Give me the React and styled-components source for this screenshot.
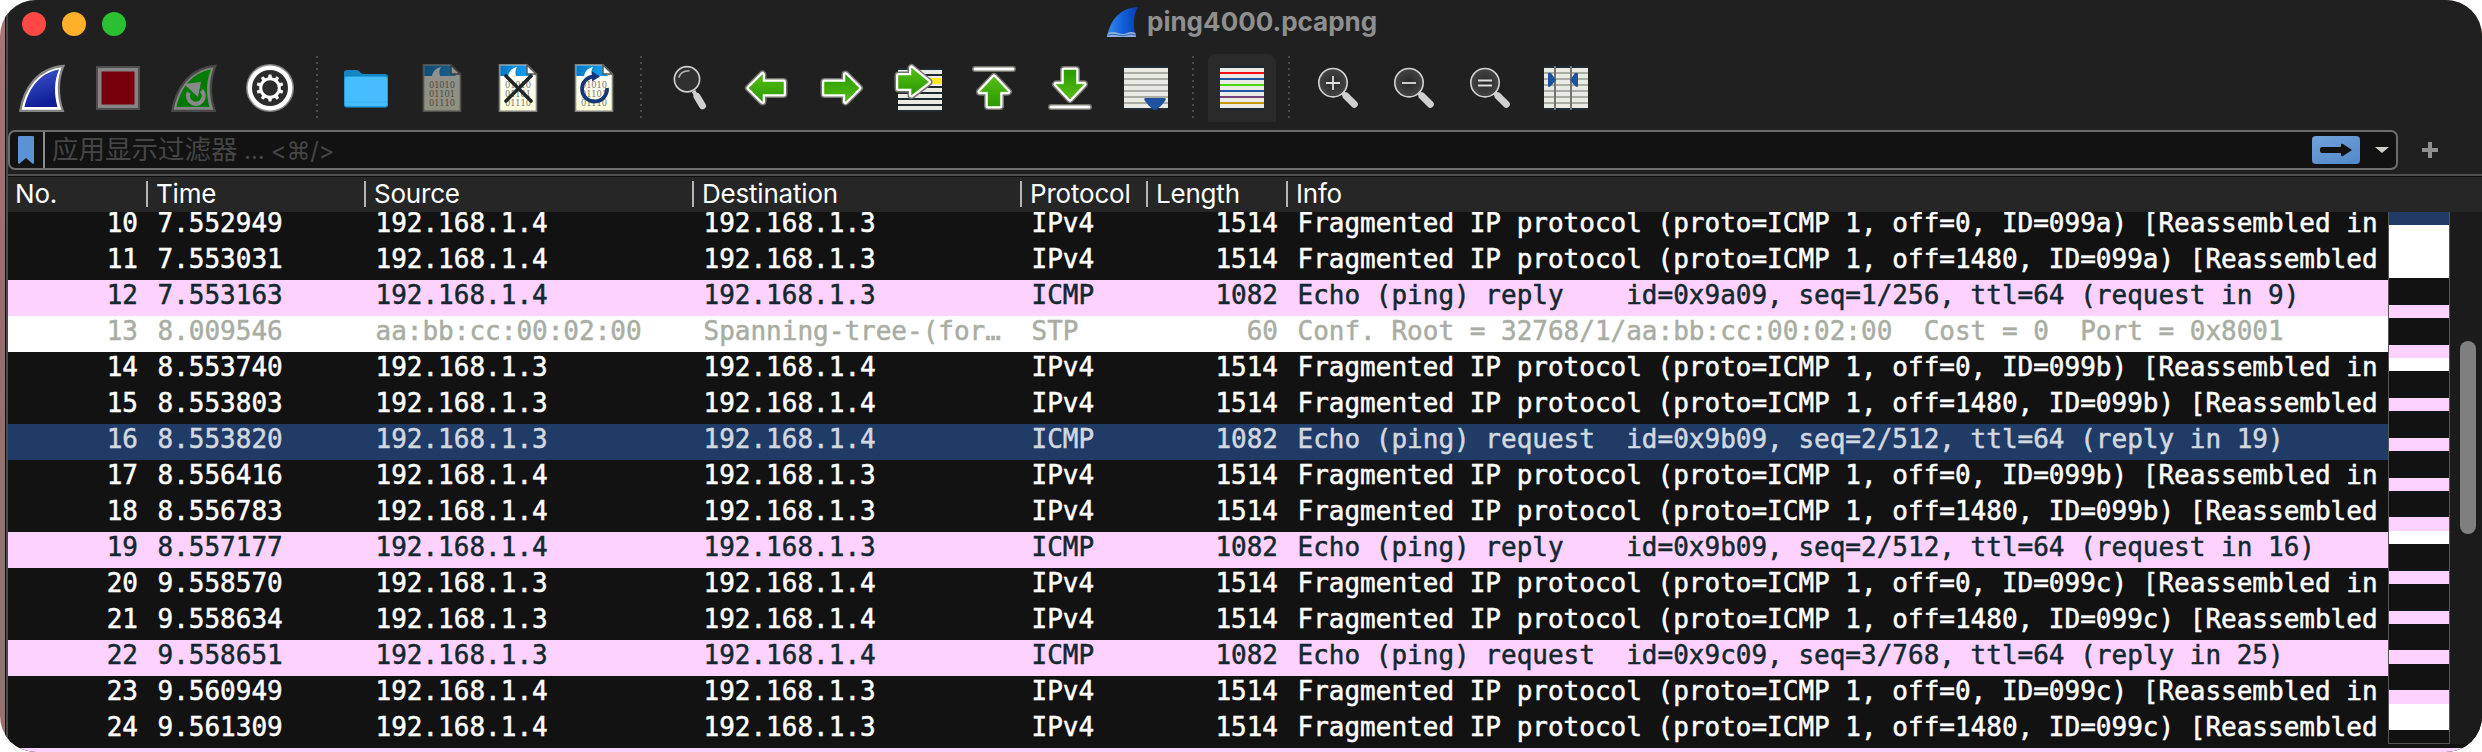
import React from 'react';
import styled, { createGlobalStyle, css } from 'styled-components';

const Global = createGlobalStyle`
  html, body { margin: 0; background: #fff; }
  * { box-sizing: border-box; }
`;

const Desktop = styled.main`
  width: 2482px;
  height: 752px;
  padding-left: 5px;
  overflow: hidden;
  border-radius: 36px;
  background: linear-gradient(#a87676, #966d6d 40%, #8d7670 90%, #a06c6c);
`;

const Window = styled.section`
  height: 752px;
  display: flex;
  flex-direction: column;
  background: #202020;
  border-left: 1px solid #111;
  box-shadow: inset 2px 0 #4a4a4a;
  padding-left: 2px;
  font-family: Inter, 'Noto Sans CJK SC', sans-serif;
`;

const TitleBar = styled.header`
  height: 49px;
  flex: none;
  display: flex;
  align-items: center;
  padding: 0 0 1px 14px;
`;

const Light = styled.span`
  width: 24px;
  height: 24px;
  border-radius: 50%;
  margin-right: 16px;
  background: ${(p) => p.$color};
`;

const Title = styled.h1`
  display: flex;
  align-items: center;
  gap: 8px;
  margin: -4px 0 0 965px;
  font-size: 26px;
  font-weight: 700;
  line-height: 32px;
  color: #8f8f8f;
  svg { display: block; }
`;

const Toolbar = styled.nav`
  height: 81px;
  flex: none;
  display: flex;
  align-items: flex-start;
  padding-top: 5px;
`;

const Tool = styled.button`
  width: 68px;
  height: 68px;
  margin: 0 4px;
  padding: 0;
  border: 0;
  border-radius: 8px 8px 0 0;
  flex: none;
  display: grid;
  place-items: center;
  background: ${(p) => (p.$on ? '#2a2a2a' : 'transparent')};
  &:first-child { margin-left: 0; }
  svg { display: block; overflow: visible; }
`;

const Divider = styled.span`
  width: 2px;
  height: 64px;
  margin: 2px 10px 0 8px;
  flex: none;
  background: repeating-linear-gradient(#4b4b4b 0 2px, transparent 2px 6px);
`;

const FilterBar = styled.div`
  height: 44px;
  flex: none;
  display: flex;
  align-items: flex-start;
`;

const FilterBox = styled.div`
  width: 2390px;
  height: 40px;
  display: flex;
  align-items: center;
  border: 2px solid #6d6d6d;
  border-radius: 7px;
  background: #121212;
`;

const Bookmark = styled.span`
  width: 35px;
  height: 36px;
  padding-left: 8px;
  display: flex;
  align-items: center;
  border-right: 2px solid #8d8d8d;
`;

const Placeholder = styled.span`
  flex: 1;
  padding-left: 7px;
  font-size: 26.5px;
  line-height: 34px;
  color: #454545;
  white-space: pre;
`;

const Hint = styled.span`
  font-size: 24px;
  letter-spacing: -0.3px;
`;

const Apply = styled.button`
  width: 48px;
  height: 28px;
  padding: 0;
  border: 0;
  border-radius: 4px;
  display: grid;
  place-items: center;
  background: linear-gradient(160deg, #72a3da, #5088c8);
`;

const Caret = styled.span`
  margin: 0 7px 0 15px;
  border: 7px solid transparent;
  border-top: 6px solid #d0d0c8;
  border-bottom: 0;
`;

const Plus = styled.svg`
  margin: 12px 0 0 24px;
`;

const columns = css`
  display: grid;
  grid-template-columns: 138px 218px 328px 328px 126px 140px 1fr;
`;

const HeaderRow = styled.div`
  ${columns}
  height: 38px;
  flex: none;
  align-items: center;
  border-top: 2px solid #4f4f4f;
  background: #262626;
  box-shadow: inset 0 1px #0c0c0c;
`;

const HeadCell = styled.span`
  height: 26px;
  padding-left: 8px;
  border-left: 2px solid #b4b4b4;
  font-size: 26px;
  line-height: 26px;
  letter-spacing: -0.2px;
  color: #fff;
  white-space: nowrap;
  &:first-child { border-left: 0; padding-left: 7px; }
`;

const Body = styled.div`
  height: 532px;
  flex: none;
  display: flex;
  background: #1b1b1b;
`;

const Rows = styled.div`
  width: 2380px;
  overflow: hidden;
  display: flex;
  flex-direction: column;
  > :first-child { margin-top: -4px; }
`;

const tones = {
  dark: ['#121212', '#fff'],
  pink: ['#fed2ff', '#12272e'],
  white: ['#fff', '#a9ada3'],
  selected: ['#203c66', '#d2d8e0'],
};

const Row = styled.div`
  ${columns}
  height: 36px;
  flex: none;
  background: ${(p) => tones[p.$tone][0]};
  color: ${(p) => tones[p.$tone][1]};
  font-family: 'DejaVu Sans Mono', monospace;
  font-size: 26px;
  line-height: 30px;
  -webkit-text-stroke: 0.5px currentColor;
`;

const Cell = styled.span`
  padding: 0 8px 0 11.5px;
  white-space: pre;
  text-align: ${(p) => (p.$right ? 'right' : 'left')};
`;

const MiniMap = styled.div`
  width: 62px;
  height: 532px;
  overflow: hidden;
  border: 1px solid #555;
  border-top: 0;
  background: #121212;
`;

const Band = styled.div`
  height: ${(p) => p.$h}px;
  background: ${(p) => tones[p.$tone][0]};
`;

const ScrollTrack = styled.div`
  flex: 1;
  padding: 129px 0 0 10px;
`;

const Thumb = styled.div`
  width: 16px;
  height: 193px;
  border-radius: 8px;
  background: #7f7f7f;
`;

const BottomEdge = styled.div`
  height: 8px;
  flex: none;
  overflow: hidden;
  border-top: 4px solid #121212;
`;

const Fin = ({ id, outer, inner, from, to, children }) => (
  <svg width="48" height="48" viewBox="0 0 48 48">
    <defs>
      <linearGradient id={id} x1="0" y1="0" x2="0.3" y2="1">
        <stop offset="0" stopColor={from} />
        <stop offset="1" stopColor={to} />
      </linearGradient>
    </defs>
    <path d="M2.3 46.8C6 25 19 4 45.5 1.8C40 14 39 31 44.8 46.8Z" fill={inner} stroke={outer} strokeWidth="2.2" />
    <path d="M6.500 43C10 27 20 9 41 5.500C36 17 36 30 39.500 43Z" fill={`url(#${id})`} />
    {children}
  </svg>
);

const Doc = ({ dim, children }) => (
  <svg width="40" height="48" viewBox="0 0 40 48">
    <defs>
      <linearGradient id="paper" x1="0" y1="0" x2="0" y2="1">
        <stop offset="0" stopColor="#fff" /><stop offset="1" stopColor="#ffffdc" />
      </linearGradient>
      <linearGradient id="sky"><stop offset="0" stopColor="#0378c8" /><stop offset="1" stopColor="#18a5f0" /></linearGradient>
    </defs>
    <g opacity={dim ? 0.5 : 1}>
      <path d="M1.500 .8H29L38.500 10V47.200H1.500Z" fill="url(#paper)" stroke="#82837c" strokeWidth="1.600" />
      <path d="M2.300 1.600H28.500L34 12H2.300Z" fill="url(#sky)" />
      <path d="M10 12C11 7 14 4 19 3C17 6 17 9 18 12Z" fill="#fff" />
      <path d="M29 1V10H38Z" fill="#fff" stroke="#55564f" strokeWidth="1.400" />
      <g fill="#77776e" fontFamily="DejaVu Serif" fontSize="8.300" textAnchor="middle">
        <text x="20" y="24" textLength="26">01010</text>
        <text x="20" y="33" textLength="26">01101</text>
        <text x="20" y="42" textLength="26">01110</text>
      </g>
    </g>
    {children}
  </svg>
);

const Outlined = ({ d, ...rest }) => (
  <g strokeLinejoin="round" {...rest}>
    <defs>
      <linearGradient id="green" x1="0" y1="0" x2="0" y2="1">
        <stop offset="0" stopColor="#55bd12" /><stop offset="1" stopColor="#2a9a00" />
      </linearGradient>
    </defs>
    <path d={d} stroke="#74766e" strokeWidth="8" />
    <path d={d} stroke="#fff" strokeWidth="5" />
    <path d={d} fill="url(#green)" stroke="#3fac08" strokeWidth=".5" />
  </g>
);

const SideArrow = ({ flip }) => (
  <svg width="44" height="44" viewBox="0 0 44 44">
    <Outlined d="M5 22L18.500 8.500V16H39.500V28H18.500V35.500Z" transform={flip ? 'rotate(180 22 22)' : undefined} />
  </svg>
);

const EndArrow = ({ down }) => (
  <svg width="44" height="44" viewBox="0 0 44 44">
    <g transform={down ? 'rotate(180 22 22)' : undefined}>
      <path d="M3 3H41" stroke="#74766e" strokeWidth="6" strokeLinecap="round" />
      <path d="M3 3H41" stroke="#fff" strokeWidth="3" strokeLinecap="round" />
      <Outlined d="M22 11L36 25.700H28V40H16V25.700H8Z" />
    </g>
  </svg>
);

const Lines = ({ colors, children }) => (
  <svg width="44" height="44" viewBox="0 0 44 44">
    <path d="M0 0H44V44H0Z" fill="#202a30" />
    <path d="M0 2H44V42H0Z" fill="#ebebe6" />
    {colors.map((c, i) => <path key={i} d={`M0 ${7 + i * 6}H44`} stroke={c} strokeWidth="2" />)}
    {children}
  </svg>
);

const Lens = ({ sign }) => (
  <svg width="44" height="44" viewBox="0 0 44 44">
    <defs><radialGradient id="glass"><stop offset="0" stopColor="#292929" /><stop offset="1" stopColor="#454545" /></radialGradient></defs>
    <circle cx="17" cy="16.700" r="14.200" fill="url(#glass)" stroke="#d2d2d2" strokeWidth="1.600" />
    <path d="M26.500 26.500L30 30" stroke="#d0d0d0" strokeWidth="4" />
    <path d="M30 30L38.300 38.300" stroke="#d0d0d0" strokeWidth="7" strokeLinecap="round" />
    <path d={sign} stroke="#dedede" strokeWidth="1.800" />
  </svg>
);

const GEAR_TEETH = [0, 36, 72, 108, 144, 180, 216, 252, 288, 324];
const GREY = Array(6).fill('#a9ada3');
const STRIPES = [4, 10, 16, 22, 28, 34, 40];

const MainToolbar = () => (
  <Toolbar>
    <Tool><Fin id="blueFin" outer="#858585" inner="#fff" from="#3f5ad0" to="#101c98" /></Tool>
    <Tool>
      <svg width="44" height="44" viewBox="0 0 44 44">
        <path d="M0 0H44V44H0Z" fill="#4e4e4e" /><path d="M2 2H42V42H2Z" fill="#858585" /><path d="M5.500 5.500H38.500V38.500H5.500Z" fill="#77000c" />
      </svg>
    </Tool>
    <Tool>
      <Fin id="greenFin" outer="#484848" inner="#848484" from="#008000" to="#007800">
        <path d="M31.500 26.500A7.800 7.800 0 1 1 18.800 28.500" fill="none" stroke="#898989" strokeWidth="4.300" />
        <path d="M14 20L31 18L28 33Z" fill="#898989" />
      </Fin>
    </Tool>
    <Tool>
      <svg width="48" height="48" viewBox="0 0 48 48">
        <circle cx="24" cy="24" r="24" fill="#858585" /><circle cx="24" cy="24" r="22.500" fill="#fff" /><circle cx="24" cy="24" r="18" fill="#2c2c2c" />
        <g fill="#fff">{GEAR_TEETH.map((a) => <path key={a} d="M22 14L22.600 10.500H25.400L26 14Z" transform={`rotate(${a} 24 24)`} />)}</g>
        <circle cx="24" cy="24" r="9.300" fill="none" stroke="#fff" strokeWidth="3" />
      </svg>
    </Tool>
    <Divider />
    <Tool>
      <svg width="44" height="39" viewBox="0 0 44 39">
        <path d="M0 7V4Q0 1 3 1H12Q14 1 15 2L17 4Q18 5 20 5H41Q44 5 44 8V20H0Z" fill="#1586c2" />
        <rect y="7" width="44" height="31.500" rx="3" fill="#1da0e3" />
        <rect x="1" y="8" width="42" height="29" rx="2" fill="#47bdfd" />
        <path d="M1 33H43" stroke="#3db2f2" />
      </svg>
    </Tool>
    <Tool><Doc dim /></Tool>
    <Tool><Doc><path d="M8 12L33 37M33 12L8 37" stroke="#20262b" strokeWidth="3.600" strokeLinecap="round" /></Doc></Tool>
    <Tool>
      <Doc>
        <path d="M33 24A12.500 12.500 0 1 1 20 12.500" fill="none" stroke="#15377a" strokeWidth="3.800" />
        <path d="M18 7.500L26 12.500L18 17.500Z" fill="#15377a" />
      </Doc>
    </Tool>
    <Divider />
    <Tool>
      <svg width="44" height="44" viewBox="0 0 44 44">
        <circle cx="19" cy="13.300" r="12.600" fill="#303030" stroke="#cdcdcd" strokeWidth="1.700" />
        <path d="M11 11Q13 5 21 4.800" fill="none" stroke="#b6b6b6" strokeWidth="1.600" strokeLinecap="round" />
        <path d="M25.500 25L29 31" stroke="#d0d0d0" strokeWidth="4" />
        <path d="M29 30.500L34.500 39.800" stroke="#d0d0d0" strokeWidth="7" strokeLinecap="round" />
      </svg>
    </Tool>
    <Tool><SideArrow /></Tool>
    <Tool><SideArrow flip /></Tool>
    <Tool>
      <svg width="44" height="44" viewBox="0 0 44 44">
        <path d="M2 2H46V46H2Z" fill="#202a30" />
        {STRIPES.map((y) => <path key={y} d={`M2 ${y + 2}H46`} stroke="#ebebe6" strokeWidth="4" />)}
        <path d="M28 12H46V18H28Z" fill="#ffe81c" />
        <Outlined d="M32.500 16L15.500 2V9.500H2.500V22.500H15.500V29Z" />
      </svg>
    </Tool>
    <Tool><EndArrow /></Tool>
    <Tool><EndArrow down /></Tool>
    <Tool><Lines colors={GREY}><path d="M22 32H40Q43 32 41 35Q35 43 31 44Q27 43 21 35Q19 32 22 32Z" fill="#1f529f" /></Lines></Tool>
    <Divider />
    <Tool $on><Lines colors={['#fb0a12', '#2055a5', '#46d808', '#2055a5', '#75417c', '#c5970a']} /></Tool>
    <Divider />
    <Tool><Lens sign="M10 17H24M17 10V24" /></Tool>
    <Tool><Lens sign="M10 17H24" /></Tool>
    <Tool><Lens sign="M10 14.500H24M10 19.500H24" /></Tool>
    <Tool>
      <Lines colors={GREY}>
        <path d="M11 0V44M27 0V44" stroke="#73756e" strokeWidth="2" />
        <path d="M4 8Q4 6 7 7L12 14L7 20Q4 22 4 20ZM34 8Q34 6 31 7L26 14L31 20Q34 22 34 20Z" fill="#1f529f" />
      </Lines>
    </Tool>
  </Toolbar>
);

const frag = (off, id) => `Fragmented IP protocol (proto=ICMP 1, off=${off}, ID=${id}) ${off ? '[Reassembled' : '[Reassembled in'}`;
const A = '192.168.1.4';
const B = '192.168.1.3';
const ip = (no, time, src, dst, off, id) => ['dark', no, time, src, dst, 'IPv4', 1514, frag(off, id)];
const icmp = (tone, no, time, src, dst, info) => [tone, no, time, src, dst, 'ICMP', 1082, info];

const packets = [
  ip(10, '7.552949', A, B, 0, '099a'),
  ip(11, '7.553031', A, B, 1480, '099a'),
  icmp('pink', 12, '7.553163', A, B, 'Echo (ping) reply    id=0x9a09, seq=1/256, ttl=64 (request in 9)'),
  ['white', 13, '8.009546', 'aa:bb:cc:00:02:00', 'Spanning-tree-(for…', 'STP', 60, 'Conf. Root = 32768/1/aa:bb:cc:00:02:00  Cost = 0  Port = 0x8001'],
  ip(14, '8.553740', B, A, 0, '099b'),
  ip(15, '8.553803', B, A, 1480, '099b'),
  icmp('selected', 16, '8.553820', B, A, 'Echo (ping) request  id=0x9b09, seq=2/512, ttl=64 (reply in 19)'),
  ip(17, '8.556416', A, B, 0, '099b'),
  ip(18, '8.556783', A, B, 1480, '099b'),
  icmp('pink', 19, '8.557177', A, B, 'Echo (ping) reply    id=0x9b09, seq=2/512, ttl=64 (request in 16)'),
  ip(20, '9.558570', B, A, 0, '099c'),
  ip(21, '9.558634', B, A, 1480, '099c'),
  icmp('pink', 22, '9.558651', B, A, 'Echo (ping) request  id=0x9c09, seq=3/768, ttl=64 (reply in 25)'),
  ip(23, '9.560949', A, B, 0, '099c'),
  ip(24, '9.561309', A, B, 1480, '099c'),
];

const bands = [
  ['selected', 13], ['white', 53], ['dark', 27], ['pink', 13], ['dark', 27], ['pink', 13], ['white', 13],
  ['dark', 27], ['pink', 13], ['dark', 27], ['pink', 13], ['dark', 27], ['pink', 13], ['dark', 26], ['pink', 14],
  ['white', 13], ['dark', 27], ['pink', 13], ['dark', 27], ['pink', 13], ['dark', 26], ['pink', 14], ['dark', 26],
  ['pink', 14], ['white', 26], ['dark', 13],
];

const heads = ['No.', 'Time', 'Source', 'Destination', 'Protocol', 'Length', 'Info'];

export default function App() {
  return (
    <>
      <Global />
      <Desktop>
        <Window>
          <TitleBar>
            <Light $color="#ff4846" /><Light $color="#ffb02a" /><Light $color="#2ac032" />
            <Title>
              <svg width="32" height="30" viewBox="0 0 32 30">
                <defs><linearGradient id="logo"><stop offset="0" stopColor="#3b86e8" /><stop offset=".5" stopColor="#1260dc" /><stop offset="1" stopColor="#0839ad" /></linearGradient></defs>
                <path d="M0 30C3 14 12 1 31 0C26 9 26 20 29 30Z" fill="url(#logo)" />
                <path d="M1 26Q6 24 11 26T20 26T28.500 26L29 30H0Z" fill="#8faede" />
                <path d="M1 28Q6 26.500 11 28T20 28T29 28" stroke="#3668bd" fill="none" />
              </svg>
              ping4000.pcapng
            </Title>
          </TitleBar>
          <MainToolbar />
          <FilterBar>
            <FilterBox>
              <Bookmark>
                <svg width="16" height="28" viewBox="0 0 16 28"><path d="M0 1Q0 0 1 0H15Q16 0 16 1V27L15 28L8 22L1 28L0 27Z" fill="#5b93d2" /></svg>
              </Bookmark>
              <Placeholder>应用显示过滤器<Hint> … &lt;⌘/&gt;</Hint></Placeholder>
              <Apply>
                <svg width="32" height="14" viewBox="0 0 32 14"><path d="M2 4H21V2Q21 0 23 1L32 7L23 13Q21 14 21 12V10H2Q0 10 0 8V6Q0 4 2 4Z" fill="#121212" /></svg>
              </Apply>
              <Caret />
            </FilterBox>
            <Plus width="16" height="16" viewBox="0 0 16 16"><path d="M8 0V16M0 8H16" stroke="#909090" strokeWidth="4" /></Plus>
          </FilterBar>
          <HeaderRow>
            {heads.map((h) => <HeadCell key={h}>{h}</HeadCell>)}
          </HeaderRow>
          <Body>
            <Rows>
              {packets.map(([tone, no, time, src, dst, proto, len, info]) => (
                <Row key={no} $tone={tone}>
                  <Cell $right>{no}</Cell><Cell>{time}</Cell><Cell>{src}</Cell><Cell>{dst}</Cell>
                  <Cell>{proto}</Cell><Cell $right>{len}</Cell><Cell>{info}</Cell>
                </Row>
              ))}
            </Rows>
            <MiniMap>{bands.map(([tone, h], i) => <Band key={i} $tone={tone} $h={h} />)}</MiniMap>
            <ScrollTrack><Thumb /></ScrollTrack>
          </Body>
          <BottomEdge><Row $tone="pink" /></BottomEdge>
        </Window>
      </Desktop>
    </>
  );
}
